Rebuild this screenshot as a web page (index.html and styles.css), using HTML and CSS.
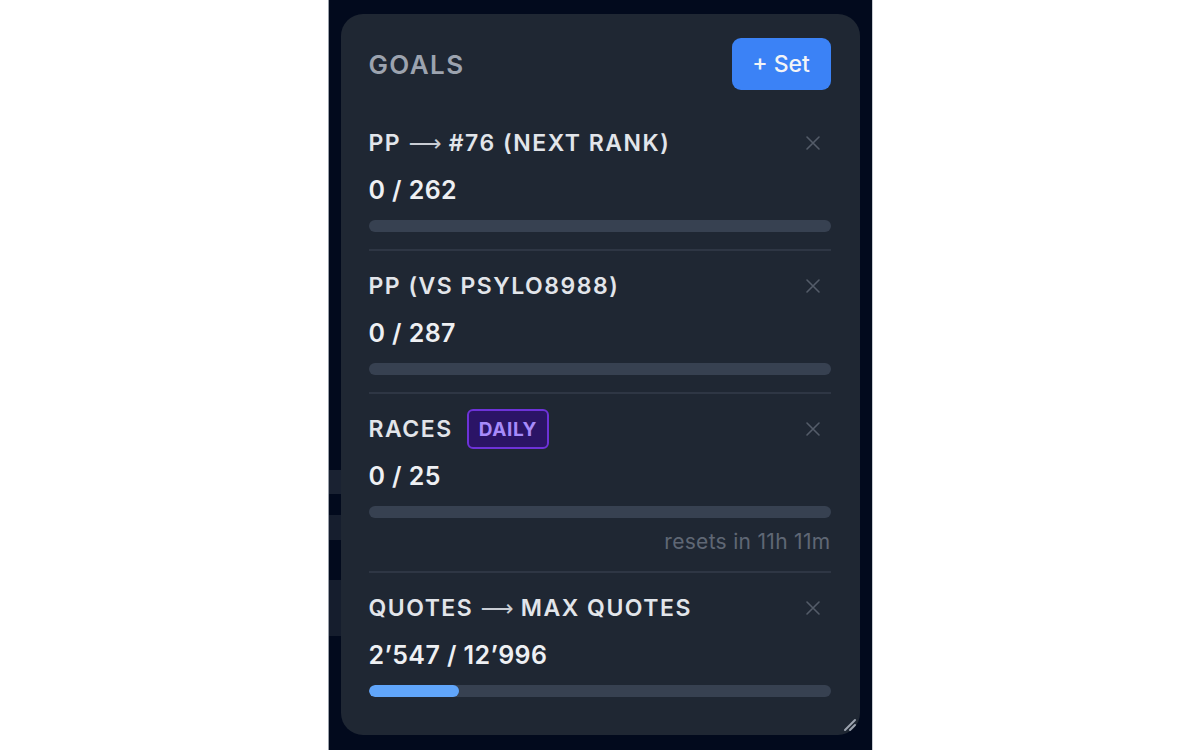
FILE: index.html
```html
<!DOCTYPE html>
<html lang="en">
<head>
    <meta charset="UTF-8">
    <meta name="viewport" content="width=device-width, initial-scale=1.0">
    <title>Goals</title>
    <link rel="stylesheet" href="styles.css">
</head>
<body>

<div class="frame">
    <div class="goals-card">
        <div class="goals-header">
            <h2>GOALS</h2>
            <button type="button" class="set-btn">+ Set</button>
        </div>

        <div class="goal">
            <div class="goal-title">
                <span>PP <span class="arrow">⟶</span> #76 (NEXT RANK)</span>
                <button type="button" class="close-btn" aria-label="Remove">
                    <svg width="16" height="16" viewBox="0 0 16 16"><path d="M2 2 L14 14 M14 2 L2 14"/></svg>
                </button>
            </div>
            <div class="goal-value">0 / 262</div>
            <div class="bar"><div class="bar-fill" style="width: 0%"></div></div>
        </div>

        <div class="goal">
            <div class="goal-title">
                <span>PP (VS PSYLO8988)</span>
                <button type="button" class="close-btn" aria-label="Remove">
                    <svg width="16" height="16" viewBox="0 0 16 16"><path d="M2 2 L14 14 M14 2 L2 14"/></svg>
                </button>
            </div>
            <div class="goal-value">0 / 287</div>
            <div class="bar"><div class="bar-fill" style="width: 0%"></div></div>
        </div>

        <div class="goal">
            <div class="goal-title">
                <span>RACES</span>
                <span class="badge">DAILY</span>
                <button type="button" class="close-btn" aria-label="Remove">
                    <svg width="16" height="16" viewBox="0 0 16 16"><path d="M2 2 L14 14 M14 2 L2 14"/></svg>
                </button>
            </div>
            <div class="goal-value">0 / 25</div>
            <div class="bar"><div class="bar-fill" style="width: 0%"></div></div>
            <div class="resets">resets in 11h 11m</div>
        </div>

        <div class="goal">
            <div class="goal-title">
                <span>QUOTES <span class="arrow">⟶</span> MAX QUOTES</span>
                <button type="button" class="close-btn" aria-label="Remove">
                    <svg width="16" height="16" viewBox="0 0 16 16"><path d="M2 2 L14 14 M14 2 L2 14"/></svg>
                </button>
            </div>
            <div class="goal-value">2’547 / 12’996</div>
            <div class="bar"><div class="bar-fill" style="width: 19.6%"></div></div>
        </div>

        <svg class="resize-grip" width="14" height="14" viewBox="0 0 14 14"><path d="M2 12 L12 2 M7 12 L12 7"/></svg>
    </div>
</div>

</body>
</html>
```

FILE: styles.css
```css
* {
    box-sizing: border-box;
    margin: 0;
    padding: 0;
    font-family: Inter, "Noto Sans", sans-serif;
}

body {
    background-color: #fff;
    display: flex;
    justify-content: center;
    height: 750px;
    overflow: hidden;
}

.frame {
    width: 545px;
    height: 750px;
    padding: 14px 12px 15px 12px;
    background-color: #020a1d;
    background-image: linear-gradient(to bottom,
        transparent 470px, #1a2232 470px, #1a2232 494px,
        transparent 494px, transparent 515px, #161e2e 515px, #161e2e 540px,
        transparent 540px, transparent 580px, #151d2d 580px, #151d2d 636px,
        transparent 636px);
    background-size: 12px 100%;
    background-repeat: no-repeat;
    border-left: 1px solid #9aa0aa;
    border-right: 1px solid #c8ccd2;
}

.goals-card {
    position: relative;
    height: 100%;
    background-color: #1f2733;
    border-radius: 22px;
    padding: 24px 29px 0 28px;
}

.goals-header {
    display: flex;
    justify-content: space-between;
    align-items: center;
    margin-bottom: 18px;
}

.goals-header h2 {
    font-size: 26px;
    font-weight: 600;
    letter-spacing: 1.4px;
    color: #9ca3af;
}

.set-btn {
    width: 99px;
    height: 52px;
    border: none;
    border-radius: 9px;
    background-color: #3b82f6;
    color: #f3f4f6;
    font-size: 23px;
    font-weight: 500;
    cursor: pointer;
}

.goal {
    padding: 15px 0 17px;
    border-bottom: 2px solid #2e3644;
}

.goal:last-of-type {
    border-bottom: none;
}

.goal-title {
    display: flex;
    align-items: center;
    gap: 14px;
    height: 40px;
    font-size: 23px;
    font-weight: 600;
    letter-spacing: 1.5px;
    color: #e2e5ea;
}

.arrow {
    font-family: "DejaVu Sans", sans-serif;
    font-weight: 400;
    letter-spacing: 0;
    color: #c9cdd4;
}

.badge {
    height: 40px;
    padding: 0 10px;
    display: flex;
    align-items: center;
    border: 2px solid #6d32d8;
    border-radius: 6px;
    background-color: #2b1466;
    color: #a78bfa;
    font-size: 19px;
    font-weight: 700;
    letter-spacing: 0.6px;
}

.close-btn {
    margin-left: auto;
    width: 36px;
    height: 32px;
    display: flex;
    align-items: center;
    justify-content: center;
    background: none;
    border: none;
    cursor: pointer;
}

.close-btn svg path {
    stroke: #545c69;
    stroke-width: 1.6;
    stroke-linecap: round;
}

.goal-value {
    margin-top: 12px;
    height: 30px;
    line-height: 30px;
    font-size: 25px;
    font-weight: 600;
    letter-spacing: 0.4px;
    color: #eef0f3;
}

.bar {
    margin-top: 15px;
    height: 12px;
    border-radius: 6px;
    background-color: #374151;
    overflow: hidden;
}

.bar-fill {
    height: 100%;
    border-radius: 6px;
    background-color: #60a5fa;
}

.resets {
    margin-top: 12px;
    height: 24px;
    line-height: 24px;
    text-align: right;
    font-size: 21px;
    letter-spacing: 0.3px;
    color: #5f6775;
}

.resize-grip {
    position: absolute;
    right: 3px;
    bottom: 3px;
}

.resize-grip path {
    stroke: #9ca3af;
    stroke-width: 2;
    stroke-linecap: round;
}
```
